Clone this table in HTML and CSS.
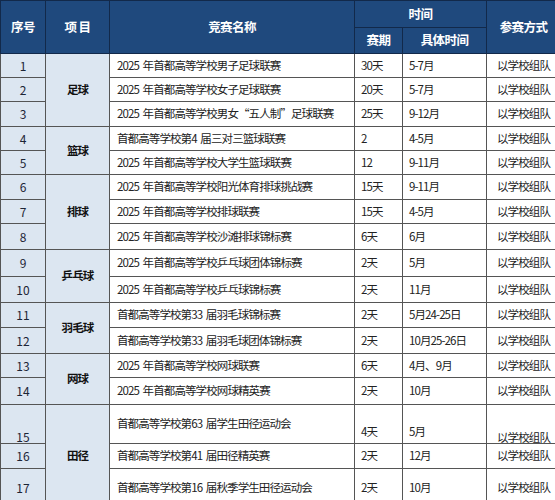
FILE: index.html
```html
<!DOCTYPE html>
<html lang="zh">
<head>
<meta charset="utf-8">
<title>竞赛安排</title>
<link rel="stylesheet" href="styles.css">
</head>
<body>
<table class="grid">
  <colgroup>
    <col class="c-no"><col class="c-item"><col class="c-name"><col class="c-dur"><col class="c-time"><col class="c-way">
  </colgroup>
  <thead>
    <tr class="h1">
      <th rowspan="2">序号</th>
      <th rowspan="2">项 目</th>
      <th rowspan="2">竞赛名称</th>
      <th colspan="2">时间</th>
      <th rowspan="2">参赛方式</th>
    </tr>
    <tr class="h2">
      <th>赛期</th>
      <th>具体时间</th>
    </tr>
  </thead>
  <tbody>
    <tr class="r24"><td class="no">1</td><td class="item" rowspan="3">足球</td><td class="name">2025 年首都高等学校男子足球联赛</td><td>30天</td><td>5-7月</td><td class="way">以学校组队</td></tr>
    <tr class="r24"><td class="no">2</td><td class="name">2025 年首都高等学校女子足球联赛</td><td>20天</td><td>5-7月</td><td class="way">以学校组队</td></tr>
    <tr class="r25"><td class="no">3</td><td class="name">2025 年首都高等学校男女“五人制”足球联赛</td><td>25天</td><td>9-12月</td><td class="way">以学校组队</td></tr>
    <tr class="r24"><td class="no">4</td><td class="item" rowspan="2">篮球</td><td class="name">首都高等学校第4 届三对三篮球联赛</td><td>2</td><td>4-5月</td><td class="way">以学校组队</td></tr>
    <tr class="r24"><td class="no">5</td><td class="name">2025 年首都高等学校大学生篮球联赛</td><td>12</td><td>9-11月</td><td class="way">以学校组队</td></tr>
    <tr class="r25"><td class="no">6</td><td class="item" rowspan="3">排球</td><td class="name">2025 年首都高等学校阳光体育排球挑战赛</td><td>15天</td><td>9-11月</td><td class="way">以学校组队</td></tr>
    <tr class="r24"><td class="no">7</td><td class="name">2025 年首都高等学校排球联赛</td><td>15天</td><td>4-5月</td><td class="way">以学校组队</td></tr>
    <tr class="r26"><td class="no">8</td><td class="name">2025 年首都高等学校沙滩排球锦标赛</td><td>6天</td><td>6月</td><td class="way">以学校组队</td></tr>
    <tr class="r27"><td class="no">9</td><td class="item" rowspan="2">乒乓球</td><td class="name">2025 年首都高等学校乒乓球团体锦标赛</td><td>2天</td><td>5月</td><td class="way">以学校组队</td></tr>
    <tr class="r26"><td class="no">10</td><td class="name">2025 年首都高等学校乒乓球锦标赛</td><td>2天</td><td>11月</td><td class="way">以学校组队</td></tr>
    <tr class="r25"><td class="no">11</td><td class="item" rowspan="2">羽毛球</td><td class="name">首都高等学校第33 届羽毛球锦标赛</td><td>2天</td><td>5月24-25日</td><td class="way">以学校组队</td></tr>
    <tr class="r26"><td class="no">12</td><td class="name">首都高等学校第33 届羽毛球团体锦标赛</td><td>2天</td><td>10月25-26日</td><td class="way">以学校组队</td></tr>
    <tr class="r24"><td class="no">13</td><td class="item" rowspan="2">网球</td><td class="name">2025 年首都高等学校网球联赛</td><td>6天</td><td>4月、9月</td><td class="way">以学校组队</td></tr>
    <tr class="r27"><td class="no">14</td><td class="name">2025 年首都高等学校网球精英赛</td><td>2天</td><td>10月</td><td class="way">以学校组队</td></tr>
    <tr class="r39 low"><td class="no">15</td><td class="item" rowspan="3">田径</td><td class="name mid">首都高等学校第63 届学生田径运动会</td><td>4天</td><td>5月</td><td class="way">以学校组队</td></tr>
    <tr class="r25"><td class="no">16</td><td class="name">首都高等学校第41 届田径精英赛</td><td>2天</td><td>12月</td><td class="way">以学校组队</td></tr>
    <tr class="r38"><td class="no">17</td><td class="name">首都高等学校第16 届秋季学生田径运动会</td><td>2天</td><td>10月</td><td class="way">以学校组队</td></tr>
  </tbody>
</table>
</body>
</html>
```
FILE: styles.css
```css
html, body {
  margin: 0;
  padding: 0;
  background: #ffffff;
  overflow: hidden;
}
body {
  font-family: "Noto Sans CJK SC", "Noto Sans", sans-serif;
  color: #222222;
}
.grid {
  border-collapse: collapse;
  table-layout: fixed;
  width: 560px;
  font-size: 11.5px;
  letter-spacing: -0.9px;
  word-spacing: 2px;
  line-height: 1;
}
.c-no { width: 45px; }
.c-item { width: 64px; }
.c-name { width: 245px; }
.c-dur { width: 48px; }
.c-time { width: 84px; }
.c-way { width: 74px; }

.grid th {
  background: #1f497d;
  color: #ffffff;
  font-weight: 700;
  font-size: 12.5px;
  letter-spacing: -0.6px;
  word-spacing: 0;
  border: 1px solid #12294a;
  text-align: center;
  vertical-align: middle;
  padding: 0;
}
.h1 { height: 27px; }
.h2 { height: 26px; }

.grid td {
  border: 1px solid #555555;
  padding: 0 6px;
  vertical-align: middle;
  text-align: left;
  white-space: nowrap;
  overflow: hidden;
}
.grid td.no {
  background: #dce6f1;
  text-align: center;
  padding: 0;
  font-size: 12px;
  letter-spacing: 0;
  color: #1c2536;
}
.grid td.item {
  background: #dce6f1;
  text-align: center;
  font-weight: 700;
  padding: 0;
  color: #111111;
}
.grid td.name { padding-left: 7px; }
.grid td.way { text-align: center; padding: 0; }

.low td { vertical-align: bottom; padding-bottom: 6px; }
.low td.mid { vertical-align: middle; padding-bottom: 0; }
.low td.item { vertical-align: middle; padding-bottom: 0; }

.r24 { height: 24px; }
.r25 { height: 25px; }
.r26 { height: 26px; }
.r27 { height: 27px; }
.r38 { height: 38px; }
.r39 { height: 39px; }
```
